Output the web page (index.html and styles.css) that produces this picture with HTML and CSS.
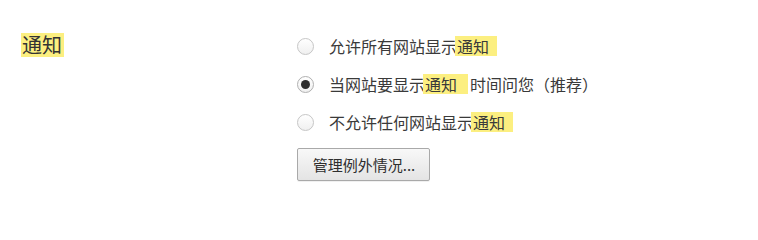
FILE: index.html
```html
<!DOCTYPE html>
<html lang="zh-CN">
<head>
<meta charset="utf-8">
<link rel="stylesheet" href="styles.css">
</head>
<body>
<div class="section">
  <h2 class="section-title"><span class="hl hl-title">通知</span></h2>
  <div class="options">
    <label class="option">
      <span class="radio"></span>
      <span class="label">允许所有网站显示<span class="hl hl-tail">通知</span></span>
    </label>
    <label class="option">
      <span class="radio checked"></span>
      <span class="label">当网站要显示<span class="hl hl-mid">通知</span>时间问您（推荐）</span>
    </label>
    <label class="option">
      <span class="radio"></span>
      <span class="label">不允许任何网站显示<span class="hl hl-tail">通知</span></span>
    </label>
    <button class="btn" type="button">管理例外情况...</button>
  </div>
</div>
</body>
</html>
```
FILE: styles.css
```css
html, body {
  margin: 0;
  padding: 0;
  background: #ffffff;
}
body {
  width: 758px;
  height: 209px;
  overflow: hidden;
  font-family: "Noto Sans CJK SC", "Noto Sans", sans-serif;
  color: #3a3a3a;
}
.section {
  display: flex;
  padding: 33px 0 0 21px;
}
.section-title {
  margin: 0;
  width: 276px;
  font-size: 20px;
  font-weight: normal;
  line-height: 24px;
  color: #333;
}
.hl {
  background: #fcef80;
}
.hl-title {
  display: inline-block;
  padding: 0 2px 0 1px;
}
.options {
  display: flex;
  flex-direction: column;
  gap: 20px;
  padding-top: 4px;
}
.option {
  display: flex;
  align-items: center;
  height: 18px;
  font-size: 16px;
  line-height: 18px;
}
.label {
  margin-left: 15px;
  white-space: nowrap;
}
.hl-tail {
  display: inline-block;
  line-height: 20px;
  padding: 0 8px 0 2px;
  margin-left: -2px;
}
.hl-mid {
  display: inline-block;
  line-height: 20px;
  padding: 0 11px 0 2px;
  margin-left: -2px;
  margin-right: 2px;
}
.radio {
  box-sizing: border-box;
  width: 17px;
  height: 17px;
  border-radius: 50%;
  border: 1px solid #c6c6c6;
  background: linear-gradient(#ffffff, #f0f0f0);
  display: flex;
  align-items: center;
  justify-content: center;
  flex: none;
}
.radio.checked {
  border-color: #b0b0b0;
}
.radio.checked::after {
  content: "";
  width: 9px;
  height: 9px;
  border-radius: 50%;
  background: #2e2e2e;
}
.btn {
  box-sizing: border-box;
  margin-top: -3px;
  width: 133px;
  height: 33px;
  padding: 0 0 0 1px;
  font-family: "Noto Sans CJK SC", "Noto Sans", sans-serif;
  font-size: 15px;
  color: #2e2e2e;
  border: 1px solid #a9a9a9;
  border-radius: 2px;
  background: linear-gradient(#f8f8f8, #e4e4e4);
  box-shadow: 0 1px 0 rgba(0,0,0,0.06);
  text-align: center;
}
```
